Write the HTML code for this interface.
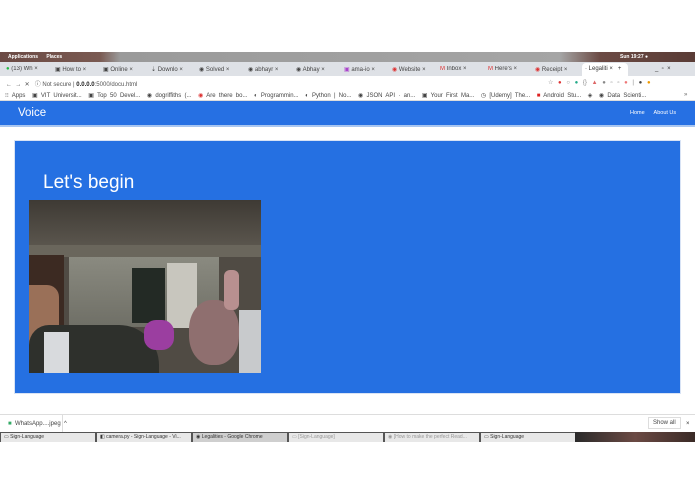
<!DOCTYPE html><html><head><style>
*{margin:0;padding:0;box-sizing:border-box}
body{width:695px;height:494px;background:#fff;font-family:"Liberation Sans",sans-serif;position:relative;overflow:hidden}
.a{position:absolute}
.t{font-size:6px;color:#333;white-space:nowrap}
.tab{position:absolute;top:66px;font-size:6px;color:#444;white-space:nowrap;width:48px;overflow:hidden}
</style></head><body>
<div class="a" style="left:0;top:52px;width:695px;height:10px;background:linear-gradient(90deg,#6b4a44 0,#7a5a52 100px,#9a9a9a 120px,#a5a5a5 560px,#6b4a44 600px,#5a3c36 695px)"></div>
<div class="a t" style="left:8px;top:54px;color:#fff;font-size:5px;font-weight:bold">Applications &nbsp;&nbsp;&nbsp;&nbsp; Places</div>
<div class="a t" style="left:620px;top:54px;color:#fff;font-size:5px;font-weight:bold">Sun 19:27 ●</div>
<div class="a" style="left:0;top:62px;width:695px;height:14px;background:#dee1e6"></div>
<div class="tab" style="left:6px"><span style="color:#2b4">●</span> (13) Wh ×</div>
<div class="tab" style="left:55px">▣ How to ×</div>
<div class="tab" style="left:103px">▣ Online ×</div>
<div class="tab" style="left:151px">⇣ Downlo ×</div>
<div class="tab" style="left:199px">◉ Solved ×</div>
<div class="tab" style="left:248px">◉ abhayr ×</div>
<div class="tab" style="left:296px">◉ Abhay ×</div>
<div class="tab" style="left:344px"><span style="color:#a4c">▣</span> ama-io ×</div>
<div class="tab" style="left:392px"><span style="color:#d33">◉</span> Website ×</div>
<div class="tab" style="left:440px"><span style="color:#d33">M</span> Inbox ×</div>
<div class="tab" style="left:488px"><span style="color:#d33">M</span> Here's ×</div>
<div class="tab" style="left:535px"><span style="color:#d33">◉</span> Receipt ×</div>
<div class="a" style="left:582px;top:63px;width:46px;height:13px;background:#fff;border-radius:4px 4px 0 0"></div>
<div class="a t" style="left:585px;top:66px">· Legaliti ×&nbsp;&nbsp; +</div>
<div class="a t" style="left:655px;top:66px">_ &nbsp;▫ &nbsp;×</div>
<div class="a" style="left:0;top:76px;width:695px;height:13px;background:#fff"></div>
<div class="a t" style="left:6px;top:79px;color:#555">← &nbsp;→ &nbsp;✕ &nbsp;&nbsp;ⓘ Not secure | <b style="color:#222">0.0.0.0</b>:5000/docu.html</div>
<div class="a t" style="left:548px;top:79px;color:#888;word-spacing:3px">☆ <span style="color:#d33">●</span> ○ <span style="color:#2a8">●</span> {} <span style="color:#d66">▲</span> ● ▫ ▫ <span style="color:#e77">●</span> | <span style="color:#444">●</span> <span style="color:#e90">●</span></div>
<div class="a" style="left:0;top:89px;width:695px;height:12px;background:#fff;border-bottom:1px solid #ddd"></div>
<div class="a t" style="left:5px;top:92px;color:#444;word-spacing:1.6px">⁝⁝ Apps &nbsp;▣ VIT Universit... &nbsp;▣ Top 50 Devel... &nbsp;◉ dogriffiths (... &nbsp;<span style="color:#d33">◉</span> Are there bo... &nbsp;◐ Programmin... &nbsp;◐ Python | No... &nbsp;◉ JSON API · an... &nbsp;▣ Your First Ma... &nbsp;◷ [Udemy] The... &nbsp;<span style="color:#d22">■</span> Android Stu... &nbsp;◈ &nbsp;◉ Data Scienti...</div>
<div class="a t" style="left:684px;top:92px;color:#666">»</div>
<div class="a" style="left:0;top:101px;width:695px;height:24px;background:#2670e3"></div>
<div class="a" style="left:0;top:125px;width:695px;height:2px;background:#a9c6f0"></div>
<div class="a" style="left:18px;top:107px;color:#fff;font-size:11.5px">Voice</div>
<div class="a" style="left:630px;top:110px;color:#fff;font-size:5.5px">Home &nbsp;&nbsp;&nbsp;&nbsp; About Us</div>
<div class="a" style="left:14px;top:140px;width:667px;height:254px;background:#2570e2;border:1px solid #d8e3f5"></div>
<div class="a" style="left:43px;top:172px;color:#fff;font-size:19px">Let's begin</div>
<div class="a" style="left:29px;top:200px;width:232px;height:173px;background:#504b44;overflow:hidden">
 <div class="a" style="left:0;top:0;width:232px;height:45px;background:linear-gradient(#3e3a34,#5a554d)"></div>
 <div class="a" style="left:0;top:45px;width:232px;height:12px;background:#6a665c"></div>
 <div class="a" style="left:40px;top:57px;width:150px;height:70px;background:linear-gradient(#8a8a80,#6f6f66)"></div>
 <div class="a" style="left:103px;top:68px;width:33px;height:55px;background:#232a25"></div>
 <div class="a" style="left:138px;top:63px;width:30px;height:65px;background:#c8c6be"></div>
 <div class="a" style="left:0;top:55px;width:35px;height:118px;background:#3c2a22"></div>
 <div class="a" style="left:0;top:85px;width:30px;height:60px;background:#9a7058;border-radius:0 12px 12px 0"></div>
 <div class="a" style="left:0;top:125px;width:130px;height:48px;background:#2e302c;border-radius:20px 40px 0 0"></div>
 <div class="a" style="left:15px;top:132px;width:25px;height:41px;background:#d8dadd"></div>
 <div class="a" style="left:115px;top:120px;width:30px;height:30px;background:#9b3ea0;border-radius:40%"></div>
 <div class="a" style="left:160px;top:100px;width:50px;height:65px;background:#8f6f6f;border-radius:45%"></div>
 <div class="a" style="left:195px;top:70px;width:15px;height:40px;background:#b89090;border-radius:6px"></div>
 <div class="a" style="left:210px;top:110px;width:22px;height:63px;background:#c8cacc"></div>
</div>
<div class="a" style="left:0;top:414px;width:695px;height:18px;background:#fff;border-top:1px solid #ddd"></div>
<div class="a t" style="left:8px;top:421px;color:#444"><span style="color:#3a6">■</span> &nbsp;WhatsApp....jpeg &nbsp;^</div>
<div class="a" style="left:62px;top:415px;width:1px;height:17px;background:#ddd"></div>
<div class="a t" style="left:648px;top:417px;border:1px solid #ddd;padding:2px 4px;color:#444">Show all</div>
<div class="a t" style="left:686px;top:421px">×</div>
<div class="a" style="left:0;top:432px;width:695px;height:10px;background:#555"></div>
<div class="a" style="left:575px;top:432px;width:120px;height:10px;background:linear-gradient(90deg,#2a2a2a,#6b4a44,#3a2a26)"></div>
<div class="a t" style="left:1px;top:433px;width:94px;height:9px;background:#e8e8e8;font-size:5px;padding:1px 3px">▭ Sign-Language</div>
<div class="a t" style="left:97px;top:433px;width:94px;height:9px;background:#e8e8e8;font-size:5px;padding:1px 3px">◧ camera.py - Sign-Language - Vi...</div>
<div class="a t" style="left:193px;top:433px;width:94px;height:9px;background:#cfcfcf;font-size:5px;padding:1px 3px">◉ Legalities - Google Chrome</div>
<div class="a t" style="left:289px;top:433px;width:94px;height:9px;background:#e8e8e8;font-size:5px;padding:1px 3px;color:#999">▭ [Sign-Language]</div>
<div class="a t" style="left:385px;top:433px;width:94px;height:9px;background:#e8e8e8;font-size:5px;padding:1px 3px;color:#999">◉ [How to make the perfect Read...</div>
<div class="a t" style="left:481px;top:433px;width:94px;height:9px;background:#e8e8e8;font-size:5px;padding:1px 3px">▭ Sign-Language</div>
</body></html>
